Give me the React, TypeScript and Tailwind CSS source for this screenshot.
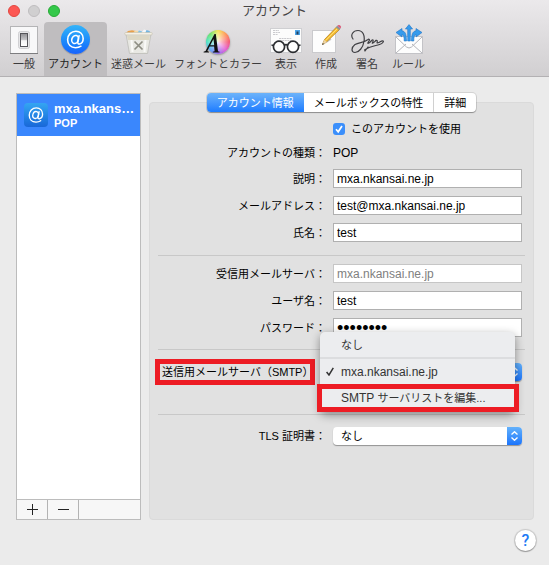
import type { ReactNode } from "react";
import clsx from "clsx";

function SwitchIcon() {
  return (
    <svg width="28" height="28" viewBox="0 0 28 28">
      <defs>
        <linearGradient id="sw" x1="0" y1="0" x2="0" y2="1">
          <stop offset="0" stopColor="#8e8e92" />
          <stop offset="0.5" stopColor="#c9c9cc" />
          <stop offset="0.55" stopColor="#f4f4f5" />
          <stop offset="1" stopColor="#fff" />
        </linearGradient>
      </defs>
      <rect x="0.5" y="0.5" width="27" height="27" fill="#f8f8f9" stroke="#b4b4b6" />
      <path d="M0 27.5h28" stroke="#7d7d80" />
      <rect x="8.5" y="5.5" width="11" height="17" rx="2" fill="#e6e6e8" stroke="#d0d0d3" />
      <rect x="10.5" y="7.5" width="7" height="13" fill="url(#sw)" stroke="#55555a" />
    </svg>
  );
}

function AtGlyph({ size }: { size: number }) {
  return (
    <svg width={size} height={size} viewBox="0 0 20 20" fill="none" stroke="#fff" strokeWidth="1.5" strokeLinecap="round">
      <ellipse cx="9.6" cy="10" rx="3.1" ry="3.9" transform="rotate(18 9.6 10)" />
      <path d="M13.4 6.4l-1.2 6c-.3 1.5.6 2 1.6 1.8 2-.4 3.5-2.500 3.500-5.200C17.300 5 14.400 2.100 10.400 2.100 5.900 2.100 2.500 5.600 2.500 10.200c0 4.600 3.100 7.700 7.500 7.700 2 0 3.800-.5 5.200-1.500" />
    </svg>
  );
}

function AccountIcon() {
  return (
    <span className="flex size-[29px] items-center justify-center rounded-full bg-linear-to-b from-[#35b4f9] to-[#1a62fb] shadow-[0_1px_1px_rgba(0,0,0,0.2)]">
      <AtGlyph size={21} />
    </span>
  );
}

function TrashIcon() {
  return (
    <svg width="29" height="25" viewBox="0 0 29 25">
      <path d="M2 4l2-2 4-.8 4 .8 1 2.500z" fill="#e9a04b" />
      <path d="M9 4l2-2.500 4 .5 1 2.500z" fill="#f3d9a8" />
      <path d="M13 4.500l2-3 3 1v2z" fill="#7fc2e8" />
      <path d="M17 4.500l3-4 3 1 2 3z" fill="#f4f8fc" />
      <path d="M21 4.500l1.500-3.500 3 1 1.500 2.500z" fill="#72b5e0" />
      <path d="M2 5h25l-3.500 19.500h-18z" fill="#e8e8e3" stroke="#bdbdb7" strokeWidth="0.800" />
      <path d="M3 6.500h23l-1 4.500H4z" fill="#d9d3bd" opacity="0.800" />
      <path d="M7.500 11l1 12M21.500 11l-1 12" stroke="#f9f9f7" strokeWidth="2" />
      <rect x="0.800" y="3.600" width="27.400" height="2.300" rx="1" fill="#f7f4ea" stroke="#c0bba6" strokeWidth="0.600" />
      <path d="M10.500 12.500l8 8M18.500 12.500l-8 8" stroke="#8d8d83" strokeWidth="1.700" />
    </svg>
  );
}

function FontColorIcon() {
  return (
    <span className="relative flex size-6">
      <span className="size-6 rounded-full bg-[radial-gradient(circle,rgba(255,255,255,0.85),transparent_75%),conic-gradient(#f5e04a,#ff8c4a,#f4496a,#e050d0,#8a60f0,#50a0f5,#3fe0c0,#5fe060,#f5e04a)] shadow-[0_1px_2px_rgba(0,0,0,0.35)]" />
      <svg className="absolute -left-1 top-0.5" width="20" height="22" viewBox="0 0 20 22">
        <path
          d="M12.500 2h1.300l2.200 17.200 1.600.5v.9h-6.800v-.9l1.800-.5-.5-4.700H7.600l-2.200 4.600 1.600.6v.9H1.600v-.9l1.900-.6zM11.500 7L8.200 13.200h4z"
          fill="#111"
          fillRule="evenodd"
        />
      </svg>
    </span>
  );
}

function GlassesIcon() {
  return (
    <svg width="32" height="26" viewBox="0 0 32 26">
      <rect x="0.500" y="0.500" width="31" height="24" fill="#fcfcfc" stroke="#cfcfd2" />
      <rect x="25" y="2" width="5" height="5" fill="#4ba3e8" />
      <rect x="26.500" y="3.500" width="2" height="3" fill="#23415e" />
      <path d="M3 2.500h6M3 4.500h7M3 6.500h5M9 10.500h13M7 12.500h16" stroke="#bdbdc2" strokeWidth="0.800" strokeDasharray="2 0.600" />
      <g fill="#fff" fillOpacity="0.6" stroke="#2b2d31" strokeWidth="1.700">
        <circle cx="9" cy="18.800" r="5.600" />
        <circle cx="23" cy="18.800" r="5.600" />
        <path d="M14.200 17.500q1.800-1.800 3.600 0M3.500 17.500l-2-.5M28.500 17.500l2-.5" fill="none" />
      </g>
    </svg>
  );
}

function ComposeIcon() {
  return (
    <svg width="32" height="30" viewBox="-2 0 32 30">
      <rect x="0.500" y="6.500" width="23" height="22" fill="#fdfdfd" stroke="#cacacd" />
      <path d="M11 20l8-5" stroke="#c5c5c5" strokeWidth="1.500" />
      <path d="M10.500 20.500l2-5L24.500 3l3 2.500L15 17.500z" fill="#f7bd2e" stroke="#a9761b" strokeWidth="0.700" />
      <path d="M14 16.200L25.500 4.500" stroke="#ffe07b" strokeWidth="1" />
      <path d="M10 21l2.400-5.300 2.700 2.200z" fill="#ecd3a4" />
      <path d="M10 21l.9-2 1.100.9z" fill="#333" />
      <path d="M23.800 3.300l1.500-1.500 3.200 2.700-1.500 1.500z" fill="#8d949b" />
      <path d="M25.300 1.800q1-1.500 2.700-.5 2 1.500.5 3.200z" fill="#db5a78" />
    </svg>
  );
}

function SignatureIcon() {
  return (
    <svg width="34" height="25" viewBox="0 0 34 25" fill="none" stroke="#404044" strokeWidth="1.200" strokeLinecap="round">
      <path d="M3 10C0 6 3 1.500 8 1.500c5 0 7 5 6 11-1 6-5 11-9 11-4 0-4-5 0-8 4-2.500 9-1.500 13-5 1-1 2 0 1 1.500-1 1.500-2 3 0 2s3-4 4-3-2 4 0 3 3-3.500 4-2.500-1 3 1 2.300 3-2 4.500-2c2 0 .5 2.700-3 3.700-5 1.500-10 2-15 5.500M15 22l3-4" />
    </svg>
  );
}

function RulesIcon() {
  return (
    <svg width="28" height="30" viewBox="0 0 28 30">
      <rect x="0.500" y="12.500" width="27" height="17" fill="#fdfdfd" stroke="#c3c3c7" />
      <path d="M1 29l10-9M27 29l-10-9M1 13l10.500 10q2.500 2 5 0L27 13" fill="none" stroke="#b5b5ba" />
      <g fill="#369bec" stroke="#2275c8" strokeWidth="0.600">
        <path d="M14 .6l3.600 4.400h-2.300V17h-2.600V5h-2.300z" />
        <path d="M1 8.500l6-4v2.300c3.500.5 4.500 4 4.500 10.200H9.200c0-4-.5-6-2.200-6.500v2.500z" />
        <path d="M27 8.500l-6-4v2.300c-3.500.5-4.500 4-4.500 10.200h2.300c0-4 .5-6 2.200-6.500v2.500z" />
      </g>
    </svg>
  );
}

const tools: { label: string; icon: ReactNode; active?: boolean }[] = [
  { label: "一般", icon: <SwitchIcon /> },
  { label: "アカウント", icon: <AccountIcon />, active: true },
  { label: "迷惑メール", icon: <TrashIcon /> },
  { label: "フォントとカラー", icon: <FontColorIcon /> },
  { label: "表示", icon: <GlassesIcon /> },
  { label: "作成", icon: <ComposeIcon /> },
  { label: "署名", icon: <SignatureIcon /> },
  { label: "ルール", icon: <RulesIcon /> },
];

const tabs = ["アカウント情報", "メールボックスの特性", "詳細"];

function Row({ label, id, children }: { label: string; id?: string; children: ReactNode }) {
  return (
    <div className="grid grid-cols-[168px_1fr] items-center gap-[7px] pr-[3px]">
      <label htmlFor={id} className="text-right">
        {label}
      </label>
      {children}
    </div>
  );
}

function Field({ label, id, value, type = "text", disabled }: { label: string; id: string; value: string; type?: string; disabled?: boolean }) {
  return (
    <Row label={label} id={id}>
      <input
        id={id}
        type={type}
        defaultValue={value}
        disabled={disabled}
        className={clsx(
          "h-[19px] w-full min-w-0 border bg-white px-[3px] outline-none",
          disabled ? "border-[#c6c6c6] text-[#808080]" : "border-[#b0b0b0]",
          type === "password" ? "text-lg" : "text-xs",
        )}
      />
    </Row>
  );
}

function PopUp({ id, value }: { id: string; value: string }) {
  return (
    <>
      <select
        id={id}
        className="h-[18px] w-full appearance-none rounded-sm bg-white pr-5 pl-2 shadow-[0_1px_1px_rgba(0,0,0,0.35)] outline-none"
      >
        <option>{value}</option>
      </select>
      <span className="pointer-events-none absolute inset-y-0 right-0 flex w-[15px] items-center justify-center rounded-r-sm bg-linear-to-b from-[#63b1fb] to-[#1b74fc]">
        <svg width="7" height="10" viewBox="0 0 7 10" fill="none" stroke="#fff" strokeWidth="1.300">
          <path d="M0.500 3.500l3-2.800 3 2.800M0.500 6.500l3 2.800 3-2.800" />
        </svg>
      </span>
    </>
  );
}

function Divider({ className }: { className: string }) {
  return <hr className={clsx("border-[#c8c8c8]", className)} />;
}

export default function App() {
  return (
    <div className="flex min-h-screen flex-col bg-[#ebebeb] font-['Liberation_Sans','Noto_Sans_CJK_JP',sans-serif] text-[11px] leading-4 text-black">
      <header className="border-b border-[#b3b1b3] bg-linear-to-b from-[#ebe9eb] to-[#d1cfd1]">
        <div className="grid h-[22px] grid-cols-[1fr_auto_1fr] items-center px-2">
          <div className="flex gap-2">
            <button aria-label="閉じる" className="size-3 rounded-full border border-[#e2463f] bg-[#fc5753]" />
            <button aria-label="しまう" className="size-3 rounded-full border border-[#bfbdbf] bg-[#d0cfd0]" />
            <button aria-label="拡大" className="size-3 rounded-full border border-[#27aa35] bg-[#34c84a]" />
          </div>
          <h1 className="text-[13px] text-[#464446]">アカウント</h1>
        </div>
        <nav className="flex h-[54px] pl-1">
          {tools.map((t) => (
            <button
              key={t.label}
              className={clsx(
                "flex min-w-10 flex-col items-center rounded-t-sm px-1 whitespace-nowrap",
                t.active ? "bg-[#bfbdbf] text-[#222]" : "text-[#3c3b3c]",
              )}
            >
              <span className="flex h-[34px] items-end justify-center pb-0.5">{t.icon}</span>
              {t.label}
            </button>
          ))}
        </nav>
      </header>

      <main className="flex gap-2 px-4 pt-4 pr-[15px]">
        <aside className="flex w-[125px] shrink-0 flex-col border border-[#bcbcbc] bg-white">
          <button className="flex h-[42px] items-center gap-1.5 bg-[#3a87fd] pl-[7px] text-left font-bold text-white">
            <span className="flex size-6 shrink-0 items-center justify-center rounded-sm bg-linear-to-b from-[#35a5f2] to-[#1967d8]">
              <AtGlyph size={18} />
            </span>
            <span className="flex min-w-0 flex-col">
              <span className="text-[13px] leading-4">mxa.nkans…</span>
              <span className="text-[11px] leading-[13px]">POP</span>
            </span>
          </button>
          <div className="mt-auto flex h-5 border-t border-[#bcbcbc] bg-[#f7f7f7]">
            <button aria-label="追加" className="flex w-[31px] items-center justify-center border-r border-[#b3b3b3]">
              <svg width="11" height="11" stroke="#222">
                <path d="M0 5.500h11M5.500 0v11" />
              </svg>
            </button>
            <button aria-label="削除" className="flex w-[31px] items-center justify-center border-r border-[#b3b3b3]">
              <svg width="11" height="11" stroke="#222">
                <path d="M0 5.500h11" />
              </svg>
            </button>
          </div>
        </aside>

        <section className="flex min-w-0 flex-1 flex-col">
          <div role="tablist" className="z-10 -mb-2.5 flex h-[19px] self-center overflow-hidden rounded-sm bg-white shadow-[0_0_0_1px_rgba(0,0,0,0.1),0_1px_1px_rgba(0,0,0,0.3)]">
            {tabs.map((t, i) => (
              <button
                key={t}
                role="tab"
                aria-selected={i === 0}
                className={clsx(
                  "px-2.5 whitespace-nowrap",
                  i === 0 ? "bg-linear-to-b from-[#6cb3fa] to-[#1a7bff] text-white" : "border-r border-[#d0d0d0] last:border-r-0",
                )}
              >
                {t}
              </button>
            ))}
          </div>

          <form className="min-h-[418px] rounded-sm border border-[#dadada] bg-[#e1e1e1] px-2 pt-[18px]">
            <div className="flex flex-col gap-2">
              <div className="flex h-4 items-center gap-1.5 pl-[175px]">
                <span className="relative flex">
                  <input id="use" type="checkbox" defaultChecked className="size-3 appearance-none rounded-[3px] bg-[#3b8ffb] outline-none" />
                  <svg className="pointer-events-none absolute inset-0" width="12" height="12" fill="none" stroke="#fff" strokeWidth="1.700">
                    <path d="M3 6.300l2.200 2.500L9 3" />
                  </svg>
                </span>
                <label htmlFor="use">このアカウントを使用</label>
              </div>
              <Row label="アカウントの種類：">
                <span className="text-xs leading-4">POP</span>
              </Row>
              <Field label="説明：" id="desc" value="mxa.nkansai.ne.jp" />
              <Field label="メールアドレス：" id="mail" value="test@mxa.nkansai.ne.jp" />
              <Field label="氏名：" id="name" value="test" />
            </div>
            <Divider className="mt-[13px] mb-2" />
            <div className="flex flex-col gap-2">
              <Field label="受信用メールサーバ：" id="server" value="mxa.nkansai.ne.jp" disabled />
              <Field label="ユーザ名：" id="user" value="test" />
              <Field label="パスワード：" id="pass" value="password" type="password" />
            </div>
            <Divider className="mt-3 mb-[9px]" />
            <div className="flex h-[26px] items-center pr-[3px]">
              <label
                htmlFor="smtp"
                className="-ml-[3px] flex h-[26px] w-40 shrink-0 items-center border-[5px] border-[#ed1c24] pl-0.5 whitespace-nowrap"
              >
                送信用メールサーバ（SMTP）
              </label>
              <div className="relative ml-[18px] flex flex-1">
                <PopUp id="smtp" value="mxa.nkansai.ne.jp" />
                <div
                  role="menu"
                  className="absolute -top-[31px] right-[7px] -left-[13px] flex flex-col rounded-[5px] bg-[#ecedef] text-[#333] shadow-[0_3px_10px_rgba(0,0,0,0.4)]"
                >
                  <button type="button" role="menuitem" className="h-[25px] pl-[21px] text-left">
                    なし
                  </button>
                  <hr className="border-t-2 border-[#dcdddf]" />
                  <button type="button" role="menuitem" className="flex h-[25px] items-center gap-[7px] pl-1.5 text-xs">
                    <svg width="8" height="9" fill="none" stroke="#333" strokeWidth="1.500">
                      <path d="M0.600 5l2.400 3L7.300 0.800" />
                    </svg>
                    mxa.nkansai.ne.jp
                  </button>
                  <button
                    type="button"
                    role="menuitem"
                    className="-mr-1 -ml-[3px] h-7 border-[5px] border-[#ed1c24] pl-[19px] text-left whitespace-nowrap"
                  >
                    <span className="text-xs">SMTP</span> サーバリストを編集...
                  </button>
                </div>
              </div>
            </div>
            <Divider className="mt-[29px] mb-3" />
            <Row label="TLS 証明書：" id="tls">
              <div className="relative flex">
                <PopUp id="tls" value="なし" />
              </div>
            </Row>
          </form>
        </section>
      </main>

      <footer className="flex justify-end py-2.5 pr-[13px]">
        <button
          aria-label="ヘルプ"
          className="flex size-[21px] items-center justify-center rounded-full bg-white font-['Roboto',sans-serif] text-base font-medium text-[#1f7bf5] shadow-[0_0_1px_1px_rgba(0,0,0,0.15),0_1px_1px_rgba(0,0,0,0.25)]"
        >
          ?
        </button>
      </footer>
    </div>
  );
}
